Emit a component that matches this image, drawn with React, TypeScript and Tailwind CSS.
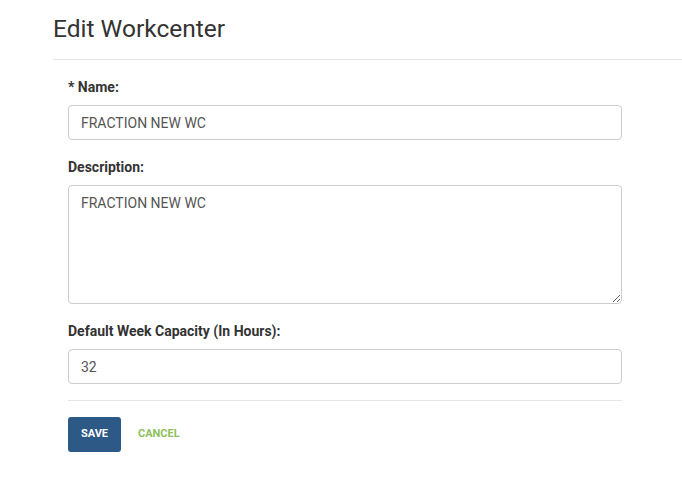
import React from "react";

const labelCls =
  "block text-[14px] leading-[20px] font-bold text-[#333] mb-[8px]";
const fieldCls =
  "w-full rounded-[4px] border border-[#ccc] bg-white px-[12px] text-[14px] text-[#555] outline-none";

const App = () => {
  return (
    <div
      className="min-h-[494px] w-[682px] bg-white"
      style={{ fontFamily: "Roboto, 'Liberation Sans', sans-serif" }}
    >
      {/* HEADER */}
      <div className="ml-[53px] border-b border-[#e5e5e5] pt-[15px] pb-[16px]">
        <h1 className="text-[24.5px] leading-[28px] font-normal text-[#333]">
          Edit Workcenter
        </h1>
      </div>

      {/* FORM */}
      <form className="ml-[68px] w-[554px] pt-[17px]">
        <div>
          <label className={labelCls}>* Name:</label>
          <input
            className={`${fieldCls} h-[35px]`}
            defaultValue="FRACTION NEW WC"
          />
        </div>

        <div className="mt-[17px]">
          <label className={labelCls}>Description:</label>
          <textarea
            className={`${fieldCls} block h-[119px] py-[7px] leading-[20px]`}
            defaultValue="FRACTION NEW WC"
          />
        </div>

        <div className="mt-[17px]">
          <label className={labelCls}>Default Week Capacity (In Hours):</label>
          <input className={`${fieldCls} h-[35px]`} defaultValue="32" />
        </div>

        <div className="mt-[16px] border-t border-[#e5e5e5]" />

        <div className="mt-[16px] flex items-center gap-[17px]">
          <button
            type="button"
            className="h-[35px] w-[53px] rounded-[3px] bg-[#2d5987] text-[11px] font-bold text-white"
          >
            SAVE
          </button>
          <button
            type="button"
            className="text-[11px] font-bold text-[#8dbf5b]"
          >
            CANCEL
          </button>
        </div>
      </form>
    </div>
  );
};

export default App;
